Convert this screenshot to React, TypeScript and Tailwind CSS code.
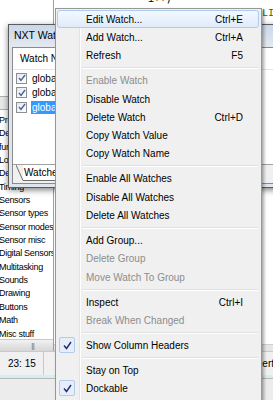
import React from 'react';

type Item =
  | { kind: 'sep' }
  | { kind: 'item'; label: string; shortcut?: string; disabled?: boolean; checked?: boolean; active?: boolean };

const menuItems: Item[] = [
  { kind: 'item', label: 'Edit Watch...', shortcut: 'Ctrl+E', active: true },
  { kind: 'item', label: 'Add Watch...', shortcut: 'Ctrl+A' },
  { kind: 'item', label: 'Refresh', shortcut: 'F5' },
  { kind: 'sep' },
  { kind: 'item', label: 'Enable Watch', disabled: true },
  { kind: 'item', label: 'Disable Watch' },
  { kind: 'item', label: 'Delete Watch', shortcut: 'Ctrl+D' },
  { kind: 'item', label: 'Copy Watch Value' },
  { kind: 'item', label: 'Copy Watch Name' },
  { kind: 'sep' },
  { kind: 'item', label: 'Enable All Watches' },
  { kind: 'item', label: 'Disable All Watches' },
  { kind: 'item', label: 'Delete All Watches' },
  { kind: 'sep' },
  { kind: 'item', label: 'Add Group...' },
  { kind: 'item', label: 'Delete Group', disabled: true },
  { kind: 'item', label: 'Move Watch To Group', disabled: true },
  { kind: 'sep' },
  { kind: 'item', label: 'Inspect', shortcut: 'Ctrl+I' },
  { kind: 'item', label: 'Break When Changed', disabled: true },
  { kind: 'sep' },
  { kind: 'item', label: 'Show Column Headers', checked: true },
  { kind: 'sep' },
  { kind: 'item', label: 'Stay on Top' },
  { kind: 'item', label: 'Dockable', checked: true },
];

const templates = [
  'Program',
  'Declarations',
  'functions',
  'Loops',
  'Debug',
  'Timing',
  'Sensors',
  'Sensor types',
  'Sensor modes',
  'Sensor misc',
  'Digital Sensors',
  'Multitasking',
  'Sounds',
  'Drawing',
  'Buttons',
  'Math',
  'Misc stuff',
];

function CheckMark() {
  return (
    <div className="w-[16px] h-[16px] border border-[#b4cbe9] bg-[#e6eefa] rounded-[2px] flex items-center justify-center">
      <svg width="9" height="9" viewBox="0 0 9 9">
        <path d="M1 4.5 L3.5 7.5 L8 1" fill="none" stroke="#1c2c7a" strokeWidth="1.4" />
      </svg>
    </div>
  );
}

function ContextMenu() {
  return (
    <div className="absolute left-[55px] top-[8px] w-[207px] h-[400px] bg-[#f0f0f0] border border-[#979797] shadow-[2px_2px_3px_rgba(0,0,0,0.35)] pt-[1px] text-[10px] text-black">
      <div className="absolute left-[23px] top-0 bottom-0 w-[2px] border-l border-r border-l-[#e2e3e3] border-r-white"></div>
      {menuItems.map((it, i) =>
        it.kind === 'sep' ? (
          <div key={i} className="h-[6.7px] flex items-center pl-[26px] pr-[3px]">
            <div className="w-full h-[2px] border-t border-[#e0e0e0] border-b border-b-white"></div>
          </div>
        ) : (
          <div
            key={i}
            className={`relative h-[18.3px] ml-[1px] mr-[2px] flex items-center pl-[28px] pr-[15px] rounded-[3px] border ${
              it.active ? 'border-[#aecbf0] bg-gradient-to-b from-[#f3f8fe] to-[#e0ebfa]' : 'border-transparent'
            } ${it.disabled ? 'text-[#8d8d8d]' : 'text-black'}`}
          >
            {it.checked && (
              <div className="absolute left-[1px] top-[0px]">
                <CheckMark />
              </div>
            )}
            <span className="flex-1 whitespace-nowrap">{it.label}</span>
            {it.shortcut && <span className="whitespace-nowrap">{it.shortcut}</span>}
          </div>
        )
      )}
    </div>
  );
}

function WatchWindow() {
  const rows = ['global1', 'global2', 'global3'];
  return (
    <div className="absolute left-[8px] top-[24px] w-[300px] h-[164px] border border-[#5b5b5b] bg-[#dfe5ec] shadow-[0_2px_6px_rgba(0,0,0,0.5)] flex flex-col">
      <div className="h-[22px] flex items-center pl-[5px] text-[10.5px] text-black bg-gradient-to-b from-[#c9d8ea] to-[#e4e9ef]">
        NXT Watch
      </div>
      <div className="flex-1 mx-[3px] mb-[3px] border border-[#8a8a8a] bg-[#f0f0f0] flex flex-col">
        <div className="flex-1 bg-white border-b border-[#a0a0a0] flex flex-col">
          <div className="h-[22px] flex items-center pl-[7px] text-[10px] border-b border-[#e5e5e5]">Watch Name</div>
          <div className="pt-[1px]">
            {rows.map((r, i) => (
              <div key={r} className="h-[14.5px] flex items-center pl-[3px] text-[10px]">
                <div className="w-[11px] h-[11px] border border-[#8e8f8f] bg-gradient-to-br from-[#e2e8f0] to-white flex items-center justify-center">
                  <svg width="8" height="8" viewBox="0 0 8 8">
                    <path d="M1 4 L3 6.5 L7 1" fill="none" stroke="#4a5f97" strokeWidth="1.3" />
                  </svg>
                </div>
                <span className={`ml-[4px] px-[1px] leading-[13px] ${i === 2 ? 'bg-[#3399ff] text-white w-[200px]' : ''}`}>{r}</span>
              </div>
            ))}
          </div>
        </div>
        <div className="h-[18px] flex items-start pl-[3px]">
          <div className="flex items-start h-[16px]">
            <svg width="8" height="16" viewBox="0 0 8 16">
              <path d="M0 0 L7 15.5" stroke="#6e6e6e" strokeWidth="1" fill="none" />
            </svg>
            <div className="h-[16px] bg-white border-b border-r border-[#6e6e6e] -ml-[1px] pl-[1px] pr-[6px] text-[10px] flex items-center">
              Watches
            </div>
          </div>
        </div>
      </div>
    </div>
  );
}

export default function App() {
  return (
    <div className="relative w-[273px] h-[400px] overflow-hidden bg-white font-['Liberation_Sans',Arial,sans-serif]">
      <div className="flex flex-col h-full">
        <div className="flex flex-1 min-h-0">
          {/* templates panel */}
          <div className="w-[54px] flex flex-col border-r border-[#a0a0a0]">
            <div className="h-[96px] bg-white"></div>
            <div className="h-[14px] bg-[#e9e9e9] border-t border-b border-[#b0b0b0]"></div>
            <div className="flex-1 min-h-0 overflow-hidden bg-white pt-[4px] -ml-[1px] text-[9px] tracking-[-0.3px] text-black">
              {templates.map((t) => (
                <div key={t} className="h-[13.35px] leading-[13.35px] whitespace-nowrap">
                  {t}
                </div>
              ))}
            </div>
            <div className="h-[12px] bg-gradient-to-b from-[#f2f2f2] to-[#d6d6d6] border-t border-[#c8c8c8] flex items-center justify-center pl-[12px]">
              <span className="text-[7px] text-[#777] leading-none tracking-[-1px]">|||</span>
            </div>
          </div>
          {/* editor */}
          <div className="flex-1 flex flex-col bg-white font-['Liberation_Mono',monospace] text-[10px]">
            <div className="h-[10px] leading-[10px] -mt-[5px] pl-[94px]">i++;</div>
            <div className="h-[12px] leading-[12px] mt-[3px] pl-[208px] text-[#008000]">LIGHT</div>
            <div className="flex-1"></div>
            <div className="h-[7px] bg-[#e6e6e6] border-t border-[#cfcfcf]"></div>
          </div>
        </div>
        {/* status bar */}
        <div className="h-[24px] bg-[#f0f0f0] border-t border-[#c9c9c9] flex items-center text-[10px]">
          <div className="w-[44px] h-full flex items-center pl-[8px] border-r border-[#c8c8c8]">23: 15</div>
          <div className="flex-1"></div>
          <div className="w-[35px] h-full flex items-center pl-[10px] border-l border-[#c8c8c8]">Insert</div>
        </div>
        <div className="h-[3px] bg-[#d3efef]"></div>
        <div className="h-[22px] bg-[#ececec] border-t border-[#b8b8b8]"></div>
      </div>
      <WatchWindow />
      <ContextMenu />
    </div>
  );
}
